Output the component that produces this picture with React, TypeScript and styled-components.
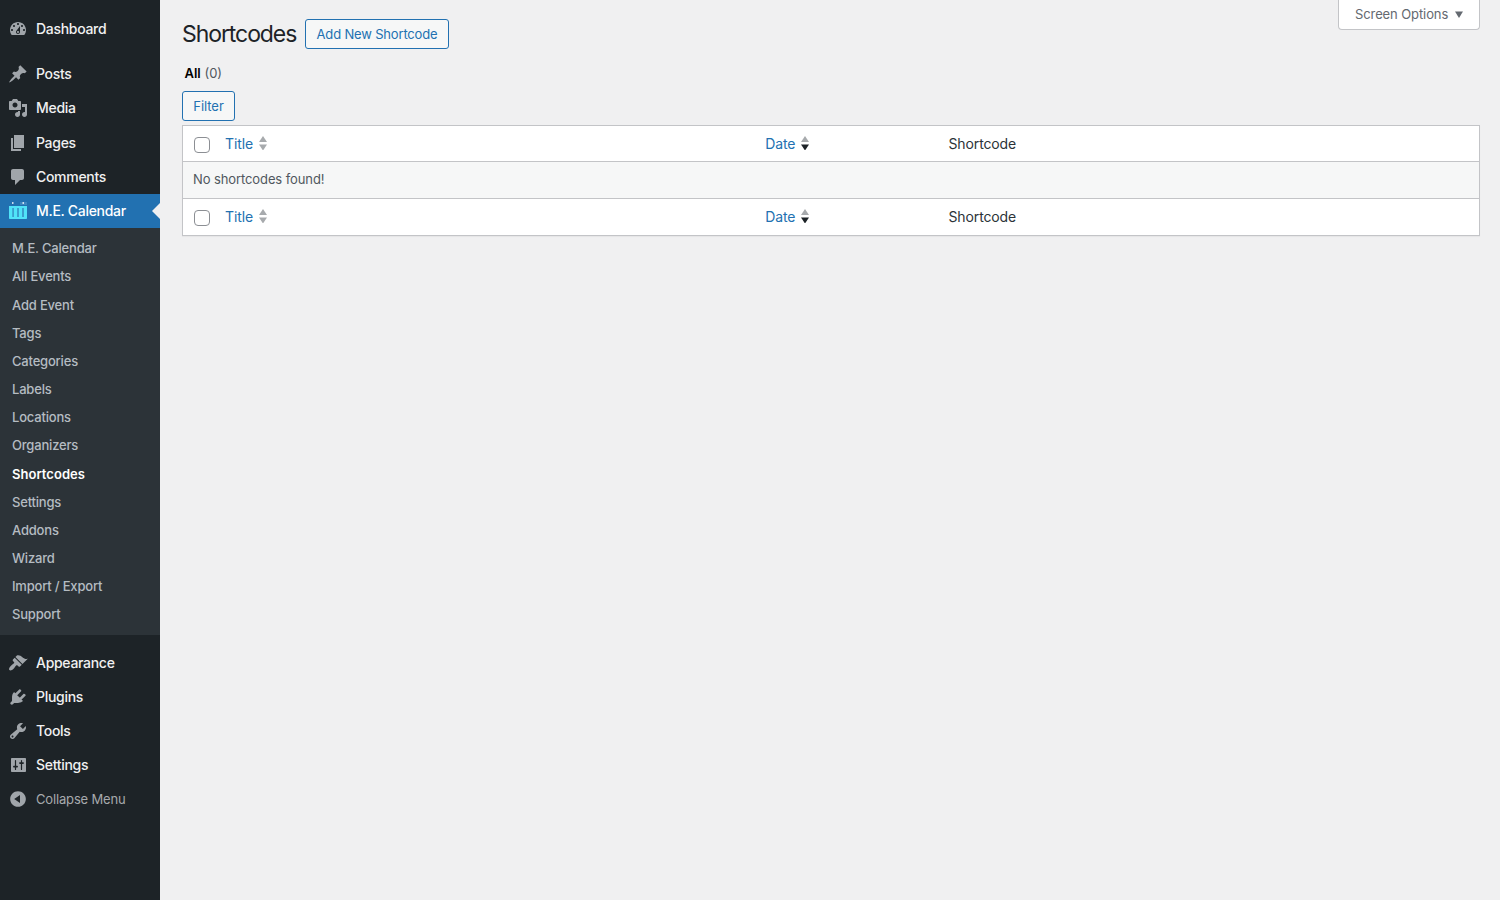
import React from "react";
import styled, { createGlobalStyle } from "styled-components";

const GlobalStyle = createGlobalStyle`
  * { box-sizing: border-box; }
  body {
    margin: 0;
    background: #f0f0f1;
    color: #3c434a;
    font: 13px/1.4 Inter, "Liberation Sans", sans-serif;
  }
`;

const Page = styled.div`
  display: flex;
  height: 900px;
  overflow: hidden;
`;

const Sidebar = styled.nav`
  width: 160px;
  flex: none;
  padding-top: 12px;
  background: #1d2327;
`;

const MenuItem = styled.a<{ $active?: boolean }>`
  display: flex;
  position: relative;
  align-items: center;
  height: 34.2px;
  padding-left: 8px;
  gap: 8px;
  color: ${(p) => (p.$active ? "#fff" : "#f0f0f1")};
  background: ${(p) => (p.$active ? "#2271b1" : "transparent")};
  font-size: 14px;
  font-weight: 450;
  line-height: 18.2px;
  letter-spacing: -0.3px;
  white-space: nowrap;
`;

const ActiveNotch = styled.span`
  position: absolute;
  right: 0;
  top: 9px;
  border: 8px solid transparent;
  border-left-width: 0;
  border-right-color: #f0f0f1;
`;

const Separator = styled.div`
  height: 11px;
`;

const Submenu = styled.div`
  padding: 6.1px 0 6px;
  background: #2c3338;
`;

const SubItem = styled.a<{ $current?: boolean }>`
  display: block;
  padding: 5px 12px;
  font-size: 13px;
  line-height: 18.17px;
  letter-spacing: ${(p) => (p.$current ? "0.03px" : "-0.19px")};
  color: ${(p) => (p.$current ? "#fff" : "#b5bcc2")};
  font-weight: ${(p) => (p.$current ? 600 : 450)};
`;

const Collapse = styled(MenuItem)`
  color: #a7aaad;
  font-size: 13px;
  font-weight: 400;
  letter-spacing: -0.16px;
`;

const Icon = styled.svg`
  width: 20px;
  height: 20px;
  flex: none;
  fill: #a0a5aa;
`;

const Main = styled.main`
  flex: 1;
  padding: 0 20px 0 22px;
`;

const Header = styled.header`
  display: flex;
  align-items: flex-start;
  height: 64px;
`;

const Heading = styled.h1`
  width: 115px;
  margin: 19px 8px 0 0;
  font-size: 23px;
  font-weight: 400;
  line-height: 30px;
  letter-spacing: -1.08px;
  white-space: nowrap;
  color: #1d2327;
`;

const Button = styled.button`
  height: 30px;
  padding: 0 10px;
  border: 1px solid #2271b1;
  border-radius: 3px;
  background: #f6f7f7;
  color: #2271b1;
  font: 13px/28px Inter, "Liberation Sans", sans-serif;
  white-space: nowrap;
`;

const AddButton = styled(Button)`
  width: 144px;
  margin-top: 19px;
  letter-spacing: -0.17px;
`;

const ScreenOptions = styled.button`
  display: flex;
  align-items: center;
  justify-content: space-between;
  width: 142px;
  height: 30px;
  margin-left: auto;
  padding: 0 16px 1px;
  border: 1px solid #c3c4c7;
  border-top: 0;
  border-radius: 0 0 4px 4px;
  background: #fff;
  color: #646970;
  font: 13px/28px Inter, "Liberation Sans", sans-serif;
  letter-spacing: -0.1px;
`;

const Filters = styled.div`
  height: 27px;
  padding: 0 2.5px;
  line-height: 19px;
  color: #50575e;
  b {
    color: #000;
    font-weight: 600;
  }
`;

const FilterButton = styled(Button)`
  display: block;
  width: 53px;
  letter-spacing: -0.05px;
`;

const Table = styled.section`
  margin-top: 4px;
  border: 1px solid #c3c4c7;
  background: #fff;
  box-shadow: 0 1px 1px rgba(0, 0, 0, 0.04);
`;

const HeadRow = styled.div<{ $height: number }>`
  display: grid;
  grid-template-columns: 42px 540.3px 183.2px 1fr;
  align-items: center;
  height: ${(p) => p.$height}px;
  font-size: 14px;
  letter-spacing: -0.12px;
  color: #2c3338;
`;

const EmptyRow = styled.div`
  height: 38px;
  padding: 0 10px;
  border: solid #c3c4c7;
  border-width: 1px 0;
  background: #f6f7f7;
  color: #50575e;
  line-height: 35px;
  letter-spacing: -0.1px;
`;

const Checkbox = styled.input`
  appearance: none;
  width: 16px;
  height: 16px;
  margin: 2px 0 0 11px;
  border: 1px solid #8c8f94;
  border-radius: 4px;
  background: #fff;
`;

const SortLink = styled.a`
  display: flex;
  align-items: center;
  gap: 6px;
  color: #2271b1;
`;

const SortArrows = styled.svg`
  width: 8px;
  height: 14px;
  margin-bottom: 2px;
`;

const paths = {
  dashboard:
    "M3.76 16h12.48c1.1-1.37 1.76-3.11 1.76-5 0-4.42-3.58-8-8-8s-8 3.58-8 8c0 1.89.66 3.63 1.76 5zM10 4c.55 0 1 .45 1 1s-.45 1-1 1-1-.45-1-1 .45-1 1-1zM6 6c.55 0 1 .45 1 1s-.45 1-1 1-1-.45-1-1 .45-1 1-1zm8 0c.55 0 1 .45 1 1s-.45 1-1 1-1-.45-1-1 .45-1 1-1zm-5.37 5.55L12 7v6c0 1.1-.9 2-2 2s-2-.9-2-2c0-.57.24-1.08.63-1.45zM4 10c.55 0 1 .45 1 1s-.45 1-1 1-1-.45-1-1 .45-1 1-1zm12 0c.55 0 1 .45 1 1s-.45 1-1 1-1-.45-1-1 .45-1 1-1zm-5 3c0-.55-.45-1-1-1s-1 .45-1 1 .45 1 1 1 1-.45 1-1z",
  posts:
    "M10.44 3.02l1.82-1.82 6.36 6.35-1.83 1.82c-1.05-.68-2.48-.57-3.41.36l-.75.75c-.92.93-1.04 2.35-.35 3.41l-1.83 1.82-2.41-2.41-2.8 2.79c-.42.42-3.38 2.71-3.8 2.29s1.86-3.39 2.28-3.81l2.79-2.79L4.1 9.36l1.83-1.82c1.05.69 2.48.57 3.4-.36l.75-.75c.93-.92 1.05-2.35.36-3.41z",
  media:
    "M13 11V4c0-.55-.45-1-1-1h-1.67L9 1H5L3.67 3H2c-.55 0-1 .45-1 1v7c0 .55.45 1 1 1h10c.55 0 1-.45 1-1zM7 4.5c1.38 0 2.5 1.12 2.5 2.5S8.38 9.5 7 9.5 4.5 8.38 4.5 7 5.62 4.5 7 4.5zM14 6h5v10.5c0 1.38-1.12 2.5-2.5 2.5S14 17.88 14 16.5s1.12-2.5 2.5-2.5c.17 0 .34.02.5.05V9h-3V6zm-4 8.05V13h2v3.5c0 1.38-1.12 2.5-2.5 2.5S7 17.88 7 16.5 8.12 14 9.5 14c.17 0 .34.02.5.05z",
  pages: "M6 15V2h10v13H6zm-1 1h8v2H3V5h2v11z",
  comments:
    "M5 2h9c1.1 0 2 .9 2 2v7c0 1.1-.9 2-2 2h-2l-5 5v-5H5c-1.1 0-2-.9-2-2V4c0-1.1.9-2 2-2z",
  appearance:
    "M14.48 11.06L7.41 3.99l1.5-1.5c.5-.56 2.3-.47 3.51.32 1.21.8 1.43 1.28 2.91 2.1 1.18.64 2.45 1.26 4.45.85zm-.71.71L6.7 4.7 4.93 6.47c-.39.39-.39 1.02 0 1.41l1.06 1.06c.39.39.39 1.03 0 1.42-.6.6-1.43 1.11-2.21 1.69-.35.26-.7.53-1.01.84C1.43 14.23.4 16.08 1.4 17.07c.99 1 2.84-.03 4.18-1.36.31-.31.58-.66.85-1.02.57-.78 1.08-1.61 1.69-2.21.39-.39 1.02-.39 1.41 0l1.06 1.06c.39.39 1.02.39 1.41 0z",
  plugins:
    "M13.11 4.36L9 8.47 7.13 6.6l4.11-4.11c.35-.34 1.05-.2 1.56.32.52.51.66 1.21.31 1.55zm-8 1.77l.91-1.12 9.01 9.01-1.19.84c-.71.71-2.63 1.16-3.82 1.16H6.14L4.9 17.26c-.59.59-1.54.59-2.12 0-.59-.58-.59-1.53 0-2.12l1.24-1.24v-3.88c0-1.13.4-3.19 1.09-3.89zM11.5 10.97l4.11-4.11c.34-.35 1.04-.21 1.55.31.52.51.66 1.21.31 1.55l-4.11 4.12z",
  tools:
    "M16.68 9.77c-1.34 1.34-3.3 1.67-4.95.99l-5.41 6.52c-.99.99-2.59.99-3.58 0s-.99-2.59 0-3.57l6.52-5.42c-.68-1.65-.35-3.61.99-4.95 1.28-1.28 3.12-1.62 4.72-1.06l-2.89 2.89 2.82 2.82 2.86-2.87c.53 1.58.18 3.39-1.08 4.65zM3.81 16.21c.4.39 1.04.39 1.43 0 .4-.4.4-1.04 0-1.43-.39-.4-1.03-.4-1.43 0-.39.39-.39 1.03 0 1.43z",
  settings:
    "M18 16V4c0-.55-.45-1-1-1H4c-.55 0-1 .45-1 1v12c0 .55.45 1 1 1h13c.55 0 1-.45 1-1zM8.1 10.8h1.1c1 0 1 1.7 0 1.7H8.1v2c0 .8-1.2.8-1.2 0v-2H5.8c-1 0-1-1.7 0-1.7h1.1V5.500c0-.8 1.200-.8 1.200 0zM12.900 8.900h-1.100c-1 0-1-1.700 0-1.700h1.100V5.500c0-.8 1.200-.8 1.200 0v1.700h1.100c1 0 1 1.700 0 1.700h-1.100v5.600c0 .8-1.200.8-1.200 0z",
  collapse:
    "M10 2.16c4.33 0 7.84 3.51 7.84 7.84s-3.51 7.84-7.84 7.84S2.16 14.33 2.16 10 5.71 2.16 10 2.16zm2 11.72V6.12L6.18 9.97z",
};

type IconName = keyof typeof paths;

const solidIcons: IconName[] = ["dashboard", "plugins"];

const Glyph = ({ name }: { name: IconName }) => (
  <Icon viewBox="0 0 20 20">
    <path fillRule={solidIcons.includes(name) ? "nonzero" : "evenodd"} d={paths[name]} />
  </Icon>
);

const CalendarGlyph = () => (
  <Icon viewBox="0 0 20 20">
    <path fill="#50e3f8" d="M1 5h18v12.2a.8.8 0 0 1-.8.8H1.800a.8.8 0 0 1-.8-.8z" />
    <path fill="#3a9fce" d="M4.200 7H6v9H4.200zM9 7h2v9H9zM14 7h2v9h-2z" />
    <path fill="#3d86c0" d="M12 1h7v3h-7z" />
    <path fill="#fff" d="M4 1.300h1.500v1.500H4zM14.500 1.300H16v1.500h-1.500z" />
  </Icon>
);

const Item = ({ icon, label }: { icon: IconName; label: string }) => (
  <MenuItem>
    <Glyph name={icon} />
    <span>{label}</span>
  </MenuItem>
);

const submenu = [
  "M.E. Calendar", "All Events", "Add Event", "Tags", "Categories", "Labels", "Locations",
  "Organizers", "Shortcodes", "Settings", "Addons", "Wizard", "Import / Export", "Support",
];

const Sort = ({ label, desc }: { label: string; desc?: boolean }) => (
  <SortLink>
    <span>{label}</span>
    <SortArrows viewBox="0 0 8 14">
      <path fill="#a7aaad" d="M0 6 4 0l4 6z" />
      <path fill={desc ? "#1d2327" : "#a7aaad"} d="M0 8.500h8l-4 6z" />
    </SortArrows>
  </SortLink>
);

const Columns = ({ height }: { height: number }) => (
  <HeadRow $height={height}>
    <Checkbox type="checkbox" />
    <Sort label="Title" />
    <Sort label="Date" desc />
    <span>Shortcode</span>
  </HeadRow>
);

export default function App() {
  return (
    <Page>
      <GlobalStyle />
      <Sidebar>
        <Item icon="dashboard" label="Dashboard" />
        <Separator />
        <Item icon="posts" label="Posts" />
        <Item icon="media" label="Media" />
        <Item icon="pages" label="Pages" />
        <Item icon="comments" label="Comments" />
        <MenuItem $active>
          <CalendarGlyph />
          <span>M.E. Calendar</span>
          <ActiveNotch />
        </MenuItem>
        <Submenu>
          {submenu.map((label) => (
            <SubItem key={label} $current={label === "Shortcodes"}>
              {label}
            </SubItem>
          ))}
        </Submenu>
        <Separator />
        <Item icon="appearance" label="Appearance" />
        <Item icon="plugins" label="Plugins" />
        <Item icon="tools" label="Tools" />
        <Item icon="settings" label="Settings" />
        <Collapse>
          <Glyph name="collapse" />
          <span>Collapse Menu</span>
        </Collapse>
      </Sidebar>
      <Main>
        <Header>
          <Heading>Shortcodes</Heading>
          <AddButton>Add New Shortcode</AddButton>
          <ScreenOptions>
            <span>Screen Options</span>
            <svg width="8" height="7" viewBox="0 0 8 7">
              <path fill="#646970" d="M0 .5h8L4 7z" />
            </svg>
          </ScreenOptions>
        </Header>
        <Filters>
          <b>All</b> (0)
        </Filters>
        <FilterButton>Filter</FilterButton>
        <Table>
          <Columns height={35} />
          <EmptyRow>No shortcodes found!</EmptyRow>
          <Columns height={36} />
        </Table>
      </Main>
    </Page>
  );
}
